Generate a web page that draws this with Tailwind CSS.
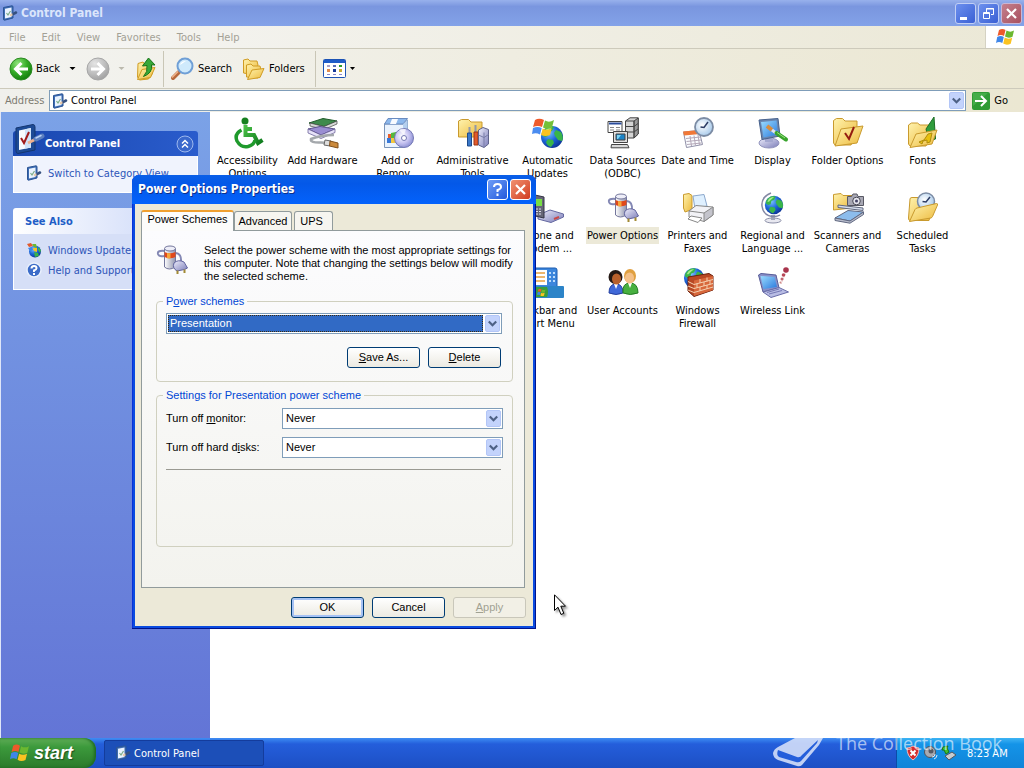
<!DOCTYPE html>
<html lang="en">
<head>
  <meta charset="UTF-8" />
  <meta name="viewport" content="width=device-width, initial-scale=1.0"/>
  <title>Control Panel</title>
  <script src="https://cdn.jsdelivr.net/npm/@tailwindcss/browser@4"></script>
</head>
<body class="relative flex h-screen flex-col overflow-hidden bg-white font-['DejaVu_Sans_Condensed','DejaVu_Sans',sans-serif] text-[11px] leading-[13px] text-black">

  <!-- Shared icon parts -->
  <svg class="absolute size-0" aria-hidden="true">
    <defs>
      <linearGradient id="gold" x1="0" y1="0" x2="1" y2="1"><stop offset="0" stop-color="#fff3ae"/><stop offset="1" stop-color="#ecb93c"/></linearGradient>
      <linearGradient id="glass" x1="0" y1="0" x2="1" y2="1"><stop offset="0" stop-color="#9adcff"/><stop offset="1" stop-color="#2a78dc"/></linearGradient>
      <linearGradient id="metal" x1="0" y1="0" x2="1" y2="0"><stop offset="0" stop-color="#ffffff"/><stop offset="1" stop-color="#8f93ad"/></linearGradient>
      <linearGradient id="lilac" x1="0" y1="0" x2="1" y2="1"><stop offset="0" stop-color="#eeeefc"/><stop offset="1" stop-color="#7b7db8"/></linearGradient>
      <linearGradient id="leaf" x1="0" y1="0" x2="1" y2="1"><stop offset="0" stop-color="#4cc048"/><stop offset="1" stop-color="#0c7a1c"/></linearGradient>
      <radialGradient id="sea" cx=".35" cy=".3" r=".8"><stop offset="0" stop-color="#7cc4ff"/><stop offset=".5" stop-color="#1c66d8"/><stop offset="1" stop-color="#0a2c8c"/></radialGradient>
      <radialGradient id="disc" cx=".4" cy=".4" r=".7"><stop offset="0" stop-color="#ffffff"/><stop offset=".5" stop-color="#c9c6f2"/><stop offset="1" stop-color="#7e83cc"/></radialGradient>
      <radialGradient id="dial" cx=".4" cy=".4" r=".7"><stop offset="0" stop-color="#ffffff"/><stop offset="1" stop-color="#9ec4e8"/></radialGradient>
      <radialGradient id="go" cx=".35" cy=".25" r=".85"><stop offset="0" stop-color="#8fe37c"/><stop offset=".5" stop-color="#35ac27"/><stop offset="1" stop-color="#0d7608"/></radialGradient>
      <radialGradient id="idle" cx=".35" cy=".25" r=".85"><stop offset="0" stop-color="#e4e4e4"/><stop offset=".6" stop-color="#bababa"/><stop offset="1" stop-color="#9b9b9b"/></radialGradient>
    </defs>
    <symbol id="flag" viewBox="0 0 19 18">
      <path fill="#ee5a2a" d="M3 2C5 .5 7.500 .5 9.500 2L8 8C6 6.700 3.800 6.700 1.500 8z"/>
      <path fill="#6bb830" d="M10.500 2.500C13 4 15.500 4 18 2.500L16.500 8.700C14 10 11.500 10 9 8.600z"/>
      <path fill="#3f86e8" d="M1.200 9C3.500 7.700 5.800 7.700 7.800 9L6.300 15C4 13.600 2 13.600 0 15z"/>
      <path fill="#fbc321" d="M8.700 9.600C11 11 13.600 11 16.200 9.700L14.700 15.700C12 17 9.500 17 7.200 15.500z"/>
    </symbol>
    <symbol id="panel" viewBox="0 0 32 32">
      <path fill="#1d4b96" stroke="#14366f" d="M3 5L20 1.500Q22 1.500 22 4V27L5 30.500Q3 30.500 3 28z"/>
      <path fill="#f7fbff" d="M6 7.500L18 5V24.500L6 27z"/>
      <path fill="#cfe3fa" d="M12 6.200L18 5V24.500L12 25.800z"/>
      <path fill="none" stroke="#a01c1c" stroke-width="2" d="M8 15l3 5 5-11"/>
      <path stroke="#f0b08c" stroke-width="3" d="M15 20L23 16"/>
      <path stroke="#5b7fc0" stroke-width="5" stroke-linecap="round" d="M23 16L29 13"/>
      <path stroke="#b9d0f4" stroke-width="1.500" stroke-linecap="round" d="M23 15L28 12.500"/>
    </symbol>
    <symbol id="panel-sm" viewBox="0 0 16 16">
      <path fill="#3c6cb4" stroke="#2c5494" d="M1.500 2.500L10 .8Q11 .8 11 2V13L2.500 15.200Q1.500 15.200 1.500 14z"/>
      <path fill="#eaf3ff" d="M3 3.800L9.500 2.600V12L3 13.400z"/>
      <path stroke="#7cac88" stroke-width="1.200" fill="none" d="M4.500 8l1.500 2 2.500-4"/>
      <path stroke="#e9c8a8" stroke-width="2" d="M8 10.500L11 9"/>
      <path stroke="#36507f" stroke-width="2.600" stroke-linecap="round" d="M11.500 8.800L14 7.500"/>
    </symbol>
    <symbol id="folder" viewBox="0 0 32 32">
      <path fill="url(#gold)" stroke="#c99a2e" d="M1.500 26L3 7Q3 5.500 5 5.500H11L13.500 8H24Q26 8 26 10V14L22 28.500H3Q1.500 28.500 1.500 26z"/>
    </symbol>
    <symbol id="folder-front" viewBox="0 0 32 32">
      <path fill="url(#gold)" stroke="#c99a2e" d="M2.500 29.500L8 17.500Q8.500 16.500 10 16L29.500 11.500Q31 11.500 30.500 13L25.500 24.500Q25 25.500 24 26z"/>
    </symbol>
    <symbol id="globe" viewBox="0 0 24 24">
      <circle cx="12" cy="12" r="11" fill="url(#sea)"/>
      <path fill="#39b54a" d="M5 4Q10 0 14 2L12 6 9 7 8 11 5 12 2 10Q2 6 5 4zM16 5L21 7Q24 12 22 16L18 15 15 11 14 8zM8 14L13 15 14 18 11 22Q7 21 6 17z"/>
      <path fill="#a4ec8c" d="M6 4.500Q9 2 12 2.500L9 5 6 8 4 8z"/>
    </symbol>
    <symbol id="battery" viewBox="0 0 32 32">
      <path fill="none" stroke="#8488b4" stroke-width="2" d="M9 7Q1 6 2 10Q3 13 8 12M19 9Q26 9 25 19"/>
      <path fill="url(#metal)" stroke="#73769c" d="M8.500 5V23Q13 27 19.500 23V5z"/>
      <ellipse cx="14" cy="4.500" rx="5.500" ry="2.500" fill="#eeeef8" stroke="#73769c"/>
      <path fill="#e0481a" d="M8.500 8Q14 10.500 19.500 8V13Q14 15.500 8.500 13z"/>
      <path fill="#f6a63a" d="M11 9V14.200Q13 14.600 14.500 14.500V9.300z"/>
      <path fill="url(#lilac)" stroke="#6265a0" d="M18 19Q22 15 28 18L31.500 24 28.500 25.500 21 27Q16 24 18 19z"/>
      <path stroke="#a28a34" stroke-width="2" d="M21.500 26.500V30M28.500 25.500V29"/>
    </symbol>
    <symbol id="chevron" viewBox="0 0 15 17">
      <rect x=".5" y=".5" width="14" height="16" rx="1.500" fill="#c3d3fc" stroke="#b3c6f7"/>
      <path fill="none" stroke="#4d6185" stroke-width="2.200" d="M3.800 6.500L7.500 10.200 11.200 6.500"/>
    </symbol>
  </svg>

  <!-- Title bar -->
  <header class="flex h-[26px] shrink-0 items-center bg-linear-to-b from-[#98b1ec] via-[#7a96df] via-25% to-[#83a2e8] pr-[2px] pl-[2px]">
    <svg class="size-4"><use href="#panel-sm"/></svg>
    <h1 class="ml-[3px] flex-1 text-[12px] font-bold text-[#dbe5fb]">Control Panel</h1>
    <div class="flex gap-[2px]">
      <button aria-label="Minimize" class="size-[21px] rounded-[3px] border border-[#c1cff5] bg-linear-to-br from-[#6d90ee] to-[#3a5fd4]">
        <svg class="size-[19px]" viewBox="0 0 19 19"><path fill="#fff" d="M4 13h7v3H4z"/></svg>
      </button>
      <button aria-label="Restore" class="size-[21px] rounded-[3px] border border-[#c1cff5] bg-linear-to-br from-[#6d90ee] to-[#3a5fd4]">
        <svg class="size-[19px]" viewBox="0 0 19 19" fill="none" stroke="#fff"><path d="M7.500 8V4.500h7v6H12M7 5h8"/><path d="M4.500 8.500h6v6h-6zM4 9.500h7"/></svg>
      </button>
      <button aria-label="Close" class="size-[21px] rounded-[3px] border border-[#c9b6d4] bg-linear-to-br from-[#c4808e] to-[#a8505f]">
        <svg class="size-[19px]" viewBox="0 0 19 19"><path stroke="#fff" stroke-width="2.200" d="M5 5l9 9M14 5l-9 9"/></svg>
      </button>
    </div>
  </header>

  <!-- Menu bar -->
  <nav class="flex h-[23px] shrink-0 items-stretch border-b border-[#cdcabb] bg-linear-to-r from-[#f5f5f4] to-[#ebe8d6] pl-[9px] text-[#a3a196]">
    <div class="flex flex-1 items-center gap-4">
      <a href="#">File</a>
      <a href="#">Edit</a>
      <a href="#">View</a>
      <a href="#">Favorites</a>
      <a href="#">Tools</a>
      <a href="#">Help</a>
    </div>
    <div class="flex w-[39px] items-center justify-center border-l border-[#d5d2c3] bg-white">
      <svg class="h-[18px] w-[19px]"><use href="#flag"/></svg>
    </div>
  </nav>

  <!-- Toolbar -->
  <div class="flex h-10 shrink-0 items-center border-b border-[#cdcabb] bg-linear-to-r from-[#f3f3f0] to-[#ebe7d2] pl-[9px]">
    <button class="flex items-center gap-[3px]">
      <svg class="size-6" viewBox="0 0 24 24"><circle cx="12" cy="12" r="11" fill="url(#go)" stroke="#2b8a22"/><path fill="none" stroke="#fff" stroke-width="3" d="M12.500 6L6.500 12l6 6M7 12h12"/></svg>
      <span>Back</span>
      <svg class="ml-[6px] h-[3px] w-[7px]" viewBox="0 0 7 3"><path d="M.5 0h6L3.500 3z"/></svg>
    </button>
    <button disabled class="ml-[10px] flex items-center gap-2" aria-label="Forward">
      <svg class="size-6" viewBox="0 0 24 24"><circle cx="12" cy="12" r="11" fill="url(#idle)" stroke="#a6a6a6"/><path fill="none" stroke="#fff" stroke-width="3" d="M11.500 6l6 6-6 6M17 12H5"/></svg>
      <svg class="h-[3px] w-[7px]" viewBox="0 0 7 3"><path fill="#bbb9ad" d="M.5 0h6L3.500 3z"/></svg>
    </button>
    <button aria-label="Up" class="ml-[10px]">
      <svg class="h-6 w-[22px]" viewBox="0 0 22 24">
        <path fill="url(#gold)" stroke="#d09c24" d="M2.500 20L3 6.500 8 5l1.500 2 7-.5 1 10-4 5.500-9 1z"/>
        <path fill="url(#gold)" stroke="#d09c24" d="M2.500 22.500L7 12.500l13-2-4.500 10z"/>
        <path fill="#38a838" stroke="#167418" d="M13.500 1L20 8l-3.500-.2Q18 16 8.500 19.500 13 15 12 8.500L7.500 9z"/>
      </svg>
    </button>
    <div class="mx-[6px] h-9 w-px bg-[#c9c6b6]"></div>
    <button class="flex items-center gap-1">
      <svg class="size-6" viewBox="0 0 24 24">
        <path stroke="#b8693c" stroke-width="4" stroke-linecap="round" d="M3 21l6-6"/><path stroke="#f0b48c" stroke-width="1.500" d="M2 20.500l6-6"/>
        <circle cx="15" cy="9" r="7.500" fill="#cfeafc" stroke="#6f9fd6" stroke-width="2"/><path fill="#fff" d="M10 8q1-4 6-4-3 2-6 4z"/>
      </svg>
      <span>Search</span>
    </button>
    <button class="ml-[10px] flex items-center gap-1">
      <svg class="h-6 w-[23px]" viewBox="0 0 23 24">
        <path fill="url(#gold)" stroke="#d09c24" d="M1.500 16V3L6 2l2 2h7l1 4-3 10z"/>
        <path fill="url(#gold)" stroke="#d09c24" d="M4.500 20V8L9 7l2 2h7l1 4-3 8z"/>
        <path fill="url(#gold)" stroke="#d09c24" d="M5.500 22.500L10 13l12-1.500-4 9z"/>
      </svg>
      <span>Folders</span>
    </button>
    <div class="mr-[7px] ml-[10px] h-9 w-px bg-[#c9c6b6]"></div>
    <button aria-label="Views" class="flex items-center gap-1">
      <svg class="h-[19px] w-[23px]" viewBox="0 0 23 19">
        <rect x=".5" y=".5" width="22" height="18" rx="1" fill="#fff" stroke="#1c53b4"/><path fill="#1f5cc8" d="M1 1h21v3H1z"/>
        <path fill="#a8a0c8" d="M4 6h3v2H4z"/><path fill="#5b6fb8" d="M10 6h3v2h-3z"/><path fill="#2c9a2c" d="M16 6h3v2h-3z"/>
        <path fill="#e08a4c" d="M4 10h3v3H4z"/><path fill="#163a98" d="M10 10h3v3h-3z"/><path fill="#c8a830" d="M16 10h3v3h-3z"/>
        <path fill="#88c" d="M4 15h3v1H4zM10 15h3v1h-3zM16 15h3v1h-3z"/>
      </svg>
      <svg class="h-[3px] w-[5px]" viewBox="0 0 5 3"><path d="M0 0h5L2.500 3z"/></svg>
    </button>
  </div>

  <!-- Address bar -->
  <form class="flex h-[23px] shrink-0 items-center bg-linear-to-r from-[#f0f0ec] to-[#ebe7d2] pl-[5px]">
    <label for="address" class="w-11 text-[#7d7b71]">Address</label>
    <div class="flex h-[21px] flex-1 items-center border border-[#7f9db9] bg-white pr-px pl-[2px]">
      <svg class="size-4"><use href="#panel-sm"/></svg>
      <input id="address" type="text" value="Control Panel" class="ml-[3px] min-w-0 flex-1 outline-none" />
      <button type="button" aria-label="Show addresses"><svg class="h-[17px] w-[15px]"><use href="#chevron"/></svg></button>
    </div>
    <button type="button" class="mr-4 ml-[6px] flex items-center gap-1">
      <svg class="size-[18px]" viewBox="0 0 18 18"><rect width="18" height="18" rx="2" fill="#2f9b35"/><path fill="#5cc05e" d="M1 1h15L1 14z" opacity=".5"/><path fill="none" stroke="#fff" stroke-width="2" d="M3 9h11M9 4l5 5-5 5"/></svg>
      <span>Go</span>
    </button>
  </form>

  <div class="flex min-h-0 flex-1">
    <!-- Task pane -->
    <aside class="w-[210px] shrink-0 border-l border-[#dfe6f8] bg-linear-to-b from-[#7ba2e7] to-[#6375d6] px-3 pt-[19px] text-[#2d55b8]">
      <section>
        <div class="relative flex h-[25px] items-center rounded-t-[3px] bg-linear-to-r from-[#1a48b0] to-[#2a5ccc] pr-1 pl-8">
          <svg class="absolute -top-2 left-0 size-8"><use href="#panel"/></svg>
          <h2 class="flex-1 font-bold text-white">Control Panel</h2>
          <button aria-label="Collapse" class="h-[18px] w-[18px]">
            <svg class="size-[18px]" viewBox="0 0 18 18"><circle cx="9" cy="9" r="8" fill="#3a68cc" stroke="#9db8ee"/><path fill="none" stroke="#fff" stroke-width="1.500" d="M6 8.500l3-3 3 3M6 12.500l3-3 3 3"/></svg>
          </button>
        </div>
        <div class="h-[37px] border border-t-0 border-white bg-[#f0f3fd] pt-[9px] pl-3">
          <a href="#" class="flex items-center gap-[6px]"><svg class="size-4"><use href="#panel-sm"/></svg>Switch to Category View</a>
        </div>
      </section>
      <section class="mt-[15px]">
        <h2 class="flex h-[26px] items-center rounded-t-[3px] bg-linear-to-r from-white to-[#c6d3f7] pl-3 font-bold text-[#215dc6]">See Also</h2>
        <ul class="flex flex-col gap-1 border border-t-0 border-white bg-[#d6dff7] pt-2 pb-[11px] pl-3">
          <li><a href="#" class="flex items-center gap-[6px]">
            <svg class="size-4" viewBox="0 0 16 16"><circle cx="9" cy="9.500" r="6" fill="url(#sea)"/><path fill="#39b54a" d="M8 10l4 1 1 3-4 1zM12 5l3 3-1 3-2-3z"/><path fill="#e25a2c" d="M1 2l4-1 2 3-4 1z"/><path fill="#6bb830" d="M6 2l4 0 1 4-3-1z"/><path fill="#3f86e8" d="M2 6l4-1 1 3-3 1z"/><path fill="#fbc321" d="M7 6l4 0 0 4-3-1z"/></svg>
            Windows Update</a></li>
          <li><a href="#" class="flex items-center gap-[6px]">
            <svg class="size-4" viewBox="0 0 16 16"><circle cx="8" cy="8" r="7" fill="#3c6cc8" stroke="#e8effc" stroke-width="1.500"/><path fill="none" stroke="#fff" stroke-width="2" d="M5.500 6.500Q5.500 4 8 4t2.500 2.200Q10.500 7.500 8 8.500V10M8 11v2"/></svg>
            Help and Support</a></li>
        </ul>
      </section>
    </aside>

    <!-- Icons -->
    <main class="grid flex-1 auto-rows-[75px] grid-cols-[repeat(auto-fill,75px)] content-start pt-[5px] text-center whitespace-nowrap">
      <a href="#" class="flex flex-col items-center gap-[5px]">
        <svg class="size-8" viewBox="0 0 32 32">
          <circle cx="13" cy="4" r="3.500" fill="#17801f"/>
          <path fill="none" stroke="url(#leaf)" stroke-width="4" d="M13.500 8V18H22L26 26 30.500 23M14 12H20"/>
          <path fill="none" stroke="#1f9a2c" stroke-width="3.500" d="M9.500 13Q2 17 5 24Q9 31 16 29.500Q22 28 23 23"/>
        </svg>
        <span>Accessibility<br>Options</span>
      </a>
      <a href="#" class="flex flex-col items-center gap-[5px]">
        <svg class="size-8" viewBox="0 0 32 32">
          <path fill="#3f8a4c" stroke="#225c2c" d="M2 6L16 1.500 30 4 17 9.500z"/><path fill="#d8dad8" stroke="#444" stroke-width=".7" d="M17 9.500L30 4V7L17 12.500 3 9V6z"/>
          <path fill="#9a8ed2" stroke="#5c528c" d="M1 12L13 9.500 28 12 14 18z"/><path fill="#e6e2f8" stroke="#5c528c" stroke-width=".7" d="M14 18L28 12V15.500L14 21.500 1 16V12z"/>
          <path fill="none" stroke="#a4a8ac" stroke-width="2.500" d="M27 18Q14 18 4 22Q3 26 14 25.500L21 26"/>
          <path fill="#ddd" stroke="#666" d="M18 23L24 24 23 29 17 28z"/><path fill="#cc8a3c" stroke="#80501c" d="M23 24L31 26V31L22.500 29z"/>
        </svg>
        <span>Add Hardware</span>
      </a>
      <a href="#" class="flex flex-col items-center gap-[5px]">
        <svg class="size-8" viewBox="0 0 32 32">
          <path fill="#eaf3fd" stroke="#7a94b8" d="M2.500 7H21L25.500 3V26L21 30.500H2.500z"/>
          <path fill="#8cb8ec" stroke="#6a8cc0" d="M2.500 7L6 1.500H25.500L21 7z"/><path fill="#f8fbff" d="M10 2h6l-2 5H8z"/>
          <path fill="#b4cfee" d="M21 7L25.500 3V26L21 30z"/>
          <path fill="#e8602c" d="M6 17h4v5H6z"/><path fill="#54b83c" d="M9 16l5-1v7H9z"/><path fill="#3878d8" d="M5 21h5v5H5z"/><path fill="#f4c83c" d="M9 21h5v5H9z"/>
          <circle cx="22" cy="21" r="9.500" fill="url(#disc)" stroke="#7478b4"/><circle cx="22" cy="21" r="2.500" fill="#fff" stroke="#7478b4"/>
          <path fill="#fff" opacity=".7" d="M22 18L17 13q4-2 7-.5z"/>
        </svg>
        <span>Add or<br>Remov...</span>
      </a>
      <a href="#" class="flex flex-col items-center gap-[5px]">
        <svg class="size-8" viewBox="0 0 32 32">
          <path fill="url(#gold)" stroke="#c99a2e" d="M1.500 20V4l3-1.500h7L14 5h11v15z"/>
          <path stroke="#9098a8" stroke-width="2" d="M12.500 10v10M18.500 8v10"/><path fill="#3a78c8" stroke="#1c4a8c" d="M10.500 16h4v13h-4z"/><path fill="#e25a2c" stroke="#9c3412" d="M17 15h4v13h-4z"/>
          <path fill="url(#lilac)" stroke="#60648c" d="M21.500 13L26 10.500 31.500 12.500V27L27 30.500 21.500 28z"/><path fill="none" stroke="#787ca8" d="M21.500 18L27 20.500 31.500 17.500M27 15.500V30"/>
        </svg>
        <span>Administrative<br>Tools</span>
      </a>
      <a href="#" class="flex flex-col items-center gap-[5px]">
        <svg class="size-8" viewBox="0 0 32 32">
          <use href="#globe" x="8" y="8" width="24" height="24"/>
          <path fill="#ee5a2a" d="M3 3Q7 .5 12 3L10 10Q6 8 1 10z"/><path fill="#74c038" d="M13 3.500Q17 6 22 3L20 10.500Q15.500 13 11 10.500z"/>
          <path fill="#4a8cf0" d="M1 11Q5.500 9 9.700 11L8 17.500Q4 15.500 0 17z"/><path fill="#fbc321" d="M10.700 11.500Q15 14 19.700 11.500L18 18Q13.500 20 9 18z"/>
        </svg>
        <span>Automatic<br>Updates</span>
      </a>
      <a href="#" class="flex flex-col items-center gap-[5px]">
        <svg class="size-8" viewBox="0 0 32 32" stroke="#444">
          <path fill="#d4d4d4" d="M18.500 4L23 .8H31.200V17L27 21H18.500z"/><path fill="#9a9a9a" d="M27 4L31.200 1V17L27 21z"/><path fill="none" d="M18.500 4H27V21M18.500 9.500H27L31 6.500M18.500 15H27L31 12"/>
          <path fill="#fff" d="M1 4.500H15V15.500H1z"/><path fill="#2a4c9c" stroke="none" d="M2 5.500H14.500V7.500H2z"/><path stroke="#888" d="M3 10.500H7M9 10.500H13M3 13H7M9 13H13"/>
          <path fill="#ddd" d="M6.500 14.500H20.500V25.500H6.500z"/><path fill="#1c84c8" d="M9 17H18V23H9z"/><path fill="#7fd4f4" stroke="none" d="M10 18h4l-3 4h-1z"/>
          <path fill="#d8d8d8" d="M4.500 27.500H20.500L22 30.800H4z"/>
        </svg>
        <span>Data Sources<br>(ODBC)</span>
      </a>
      <a href="#" class="flex flex-col items-center gap-[5px]">
        <svg class="size-8" viewBox="0 0 32 32">
          <path fill="#fafcff" stroke="#9090a8" d="M1.500 15L17 13.500 20.500 27.500 4.500 30.500z"/><path fill="#f07838" d="M1 14.500L17.500 13 18.500 17 2 18.500z"/>
          <path stroke="#b4a8b8" d="M4 21.500L18.500 20M4.500 24.500L19 23M5 27.500L19.500 26M8 19L9.500 29M12 18.500L13.500 28.500M16 18L17.500 28"/>
          <circle cx="22" cy="10" r="9" fill="url(#dial)" stroke="#7c8ca4" stroke-width="1.800"/><path fill="none" stroke="#2c3c64" stroke-width="1.500" d="M26 5L22 10.500 18.500 10"/>
        </svg>
        <span>Date and Time</span>
      </a>
      <a href="#" class="flex flex-col items-center gap-[5px]">
        <svg class="size-8" viewBox="0 0 32 32">
          <ellipse cx="12" cy="26" rx="10" ry="5" fill="url(#lilac)" stroke="#9092bc"/><path fill="#a4a8d0" d="M8 20h8v5H8z"/>
          <path fill="#6a86b0" stroke="#48628c" d="M2 3L21 1.500 23 19 5 22.500z"/><path fill="url(#glass)" d="M4 5L19.500 3.500 21 17.500 6.500 20.500z"/>
          <path stroke="#d88c3c" stroke-width="4" d="M10 9L15 13"/><path stroke="#e4e4ec" stroke-width="3" d="M15 13L19 16"/><path stroke="#38a42c" stroke-width="4" stroke-linecap="round" d="M19.500 16L29 22.500"/><path stroke="#9ce080" d="M20 15.500L28 21"/>
        </svg>
        <span>Display</span>
      </a>
      <a href="#" class="flex flex-col items-center gap-[5px]">
        <svg class="size-8" viewBox="0 0 32 32"><path fill="url(#gold)" stroke="#c99a2e" d="M1.500 26V3.500l3-2h6L13 4h12v12L19 28H3z"/><path fill="url(#gold)" stroke="#c99a2e" d="M3 29L9 12l22-3-6 17z"/><path fill="none" stroke="#941c10" stroke-width="2" d="M13 16l4 6 5-12"/></svg>
        <span>Folder Options</span>
      </a>
      <a href="#" class="flex flex-col items-center gap-[5px]">
        <svg class="size-8" viewBox="0 0 32 32"><path fill="url(#gold)" stroke="#c99a2e" d="M1.500 27V8l3-2h6L13 8h11v12L19 29H3z"/><path fill="#2f9c3c" stroke="#1c6c24" d="M19 12L27 0 28.500 22 22 24z"/><path fill="url(#gold)" stroke="#c99a2e" d="M3 30.500L9 17l21-4-5 14z"/><path fill="#e8c010" stroke="#b08c0c" d="M12 25l5-2 4-6 4-1-2 9-3 1v-3l-4 1-1 3z"/></svg>
        <span>Fonts</span>
      </a>

      <a href="#" class="col-start-5 flex flex-col items-center gap-[5px]">
        <svg class="size-8" viewBox="0 0 32 32"><path fill="url(#lilac)" stroke="#6468a0" d="M6 23L18 18 31.500 22V25L19 30.500 6 27z"/><path stroke="#c84848" stroke-width="2" d="M22 27l5-2"/><path fill="#667" stroke="#334" d="M3 3L12 5V26L3 24z"/><path fill="#78dc44" d="M3 7h7v7H3z"/><path stroke="#dde" stroke-dasharray="2 1" d="M4 17h6M4 19.500h6M4 22h6"/></svg>
        <span>Phone and<br>Modem ...</span>
      </a>
      <a href="#" class="flex flex-col items-center gap-[3px]">
        <svg class="size-8"><use href="#battery"/></svg>
        <span class="bg-[#ece9d8] px-px py-[2px]">Power Options</span>
      </a>
      <a href="#" class="flex flex-col items-center gap-[5px]">
        <svg class="size-8" viewBox="0 0 32 32"><path fill="url(#gold)" stroke="#c99a2e" d="M1.500 16V2.500L7 1.500l3 2v14L3 20z"/><path fill="#dff0ff" stroke="#8ca8cc" d="M11 4L22 2.500 25 14 13 17z"/><path fill="#f2f2f6" stroke="#888" d="M7 19L14 13.500 31 15V23L22 29.500 7 25z"/><path fill="#c4c4cc" stroke="#888" d="M22 21L31 15V23L22 29.500z"/><path fill="#fff" stroke="#888" d="M9 24L20 26 16 30.500 6 27z"/><path fill="none" stroke="#888" d="M7 19l15 2"/></svg>
        <span>Printers and<br>Faxes</span>
      </a>
      <a href="#" class="flex flex-col items-center gap-[5px]">
        <svg class="size-8" viewBox="0 0 32 32"><ellipse cx="16" cy="28.500" rx="8" ry="2.500" fill="#e8e8f0" stroke="#8c90a8"/><path fill="#a0a4b8" d="M14 23h4v5h-4z"/><path fill="none" stroke="#8488a4" stroke-width="1.500" d="M14 1Q4 5 5 14Q6 23 15 24.500Q20 25 23 23"/><use href="#globe" x="7" y="3" width="20" height="20"/></svg>
        <span>Regional and<br>Language ...</span>
      </a>
      <a href="#" class="flex flex-col items-center gap-[5px]">
        <svg class="size-8" viewBox="0 0 32 32"><path fill="url(#gold)" stroke="#c99a2e" d="M1.500 18V2.500L9 1.500l2 2h9V16z"/><path fill="#a8a8b4" stroke="#585864" d="M15.500 4.500h4l1.500-2.500h4l1 2.500h5.500v9h-16z"/><circle cx="24.500" cy="9" r="3.800" fill="#e8e8f0" stroke="#484854"/><circle cx="24.500" cy="9" r="1.500" fill="#446"/><path fill="#d4dcec" stroke="#606880" d="M6 13L31 16V18.500L6 15.500z"/><path fill="#8cbcec" stroke="#606880" d="M3 26L16 18.500 31.500 20 18 29z"/><path fill="#b8bccc" stroke="#606880" d="M3 26L18 29 31.500 20V22.500L18 31.200 3 28.500z"/></svg>
        <span>Scanners and<br>Cameras</span>
      </a>
      <a href="#" class="flex flex-col items-center gap-[5px]">
        <svg class="size-8" viewBox="0 0 32 32"><use href="#folder"/><circle cx="19" cy="9.500" r="8.500" fill="url(#dial)" stroke="#7c8ca4" stroke-width="1.500"/><path fill="none" stroke="#2c3c64" stroke-width="1.500" d="M23 5L19 10 15.500 9.500"/><use href="#folder-front"/></svg>
        <span>Scheduled<br>Tasks</span>
      </a>

      <a href="#" class="col-start-5 flex flex-col items-center gap-[5px]">
        <svg class="size-8" viewBox="0 0 32 32"><rect x="1" y="1" width="24" height="20" rx="2" fill="#3c86dc" stroke="#1c5cb0"/><path fill="#fff" d="M2 3h13v15H2z"/><path stroke="#e8a040" stroke-width="1.500" d="M4 6h9M4 10h9M4 14h9"/><path stroke="#bcdcfc" stroke-width="2" stroke-dasharray="2 2" d="M17 6h7M17 10h7M17 14h7"/><rect x="0" y="19" width="32" height="12" rx="1" fill="#2c84c8"/><path fill="#3a9c3c" d="M0 20h15q2 5 0 10H0z"/><use href="#flag" x="5" y="21" width="9" height="9"/></svg>
        <span>Taskbar and<br>Start Menu</span>
      </a>
      <a href="#" class="flex flex-col items-center gap-[5px]">
        <svg class="size-8" viewBox="0 0 32 32"><path fill="#4068d8" stroke="#2440a0" d="M2 26Q2 17 9 17T16 26Q9 29 2 26z"/><path fill="#48b040" stroke="#247c24" d="M16 26Q15 16 23 16T31 26Q23 29 16 26z"/><path fill="#fff" d="M7 17h4l-2 5zM21 16h4l-2 5z"/><circle cx="8.500" cy="10" r="7" fill="#241814"/><ellipse cx="9.500" cy="12" rx="4.500" ry="5.500" fill="#b8602c"/><ellipse cx="23" cy="9" rx="6" ry="7" fill="#e0a040"/><ellipse cx="22.500" cy="11" rx="4.500" ry="5.500" fill="#f4c088"/></svg>
        <span>User Accounts</span>
      </a>
      <a href="#" class="flex flex-col items-center gap-[5px]">
        <svg class="size-8" viewBox="0 0 32 32"><use href="#globe" x="1" y="0" width="22" height="22"/><path fill="#b84824" stroke="#6c200c" d="M6 10L27 6.500 31 9V23L12 29.500 6 24z"/><path fill="#d8683c" d="M12 13.500L31 9V23L12 29z"/><path fill="none" stroke="#f4d0b0" d="M6 14.500L12 17.500 31 12.500M6 19L12 21.500 31 16.500M6 23L12 25.500 31 20M18 12v4M25 10.500v4M15 16.500v4M22 15v4M28 13.500v4M18 20v4M25 18v4"/></svg>
        <span>Windows<br>Firewall</span>
      </a>
      <a href="#" class="flex flex-col items-center gap-[5px]">
        <svg class="size-8" viewBox="0 0 32 32"><path fill="#8890c8" stroke="#585c98" d="M1.500 8L4 6.500 19 8 22 21 6 25z"/><path fill="url(#glass)" d="M3.500 9L17.500 10 20 20 6.500 22z"/><path fill="#b8bce4" stroke="#686ca8" d="M6 25L22 20.500 31.500 25 14 30.500z"/><path stroke="#7478b4" d="M10 25.500L22 22M12 27L25 23.500"/><path stroke="#e4b4b4" stroke-dasharray="1 1" d="M24 17L30 3"/><circle cx="29" cy="3" r="2.800" fill="#a8344c"/><circle cx="26.500" cy="8" r="1.800" fill="#b84858"/><circle cx="25" cy="12" r="1.500" fill="#c06470"/><circle cx="23.500" cy="15.500" r="1" fill="#c88"/></svg>
        <span>Wireless Link</span>
      </a>
    </main>
  </div>

  <!-- Taskbar -->
  <footer class="relative flex h-[30px] shrink-0 items-stretch bg-linear-to-b from-[#3f8cf3] via-[#245edb] via-20% to-[#1d4fc4] text-white">
    <button class="flex w-24 items-center gap-1 rounded-r-xl bg-linear-to-b from-[#5eac56] via-[#3c9a3c] via-30% to-[#2b7a2b] pl-[10px] shadow-[inset_-2px_0_3px_#1f6a22]">
      <svg class="size-5"><use href="#flag"/></svg>
      <span class="font-['Liberation_Sans',sans-serif] text-[18px] leading-5 font-bold italic [text-shadow:1px_1px_1px_#1f4f1f]">start</span>
    </button>
    <button class="my-[2px] ml-2 flex w-40 items-center gap-[3px] rounded-[2px] border border-[#143c9c] bg-[#1c4fb8] pl-[10px]">
      <svg class="size-4"><use href="#panel-sm"/></svg>
      <span>Control Panel</span>
    </button>
    <div class="ml-auto flex w-32 items-center gap-[2px] border-l border-[#0c4ca8] bg-linear-to-b from-[#3cb4f4] via-[#1494e8] via-20% to-[#1184d8] pl-2">
      <svg class="size-4" viewBox="0 0 16 16"><path fill="#d42c2c" stroke="#f4b8b8" d="M8 1Q11 3 14 3Q14 11 8 15Q2 11 2 3Q5 3 8 1z"/><path stroke="#fff" stroke-width="2" d="M5.500 5.500l5 5M10.500 5.500l-5 5"/></svg>
      <svg class="size-4" viewBox="0 0 16 16"><circle cx="7" cy="7" r="5.500" fill="#a8aab0" stroke="#50545c"/><circle cx="8" cy="6" r="2.500" fill="#565a64"/><path fill="none" stroke="#e0e8f4" d="M11 14q3-1 3-4M9 12q3 0 3-3"/></svg>
      <svg class="size-4" viewBox="0 0 16 16"><path fill="#c8ccd0" stroke="#505860" d="M4 11l7-4 4 3-7 5z"/><path fill="#40c030" stroke="#187818" d="M2 2l5-1-1 2 2 4-3 2-2-4-2 0z"/></svg>
      <span class="ml-2">8:23 AM</span>
    </div>
    <div class="pointer-events-none absolute inset-y-0 right-[22px] flex items-start gap-3">
      <svg class="h-[29px] w-[51px]" viewBox="0 0 51 29"><path fill="#d3def8" opacity=".9" d="M5 9L22 0H50L46 7 29 27Q27 29 24 28L5 22Q0 20 0 15Q1 11 5 9z"/><path fill="#245edb" d="M5 12L24 19Q27 20 29 17L45 2 44 5 28 23Q26 25 23 24L6 19Q3 17 5 12z"/></svg>
      <span class="-mt-[5px] font-['Open_Sans',sans-serif] text-[18px] leading-5 text-white/60">The Collection Book</span>
    </div>
  </footer>

  <!-- Power Options dialog -->
  <div role="dialog" aria-labelledby="dialog-title" class="absolute top-[175px] left-[132px] w-[404px] rounded-t-[7px] bg-[#0a4be0] px-[3px] pb-[3px] font-['Liberation_Sans',sans-serif] shadow-[inset_-1px_-1px_0_#00138c,inset_1px_0_0_#0831d9]">
    <div class="-mx-[3px] flex h-[29px] items-center gap-[2px] rounded-t-[7px] bg-linear-to-b from-[#0a5fe8] via-[#0458e8] via-30% to-[#0362fc] pr-[5px] pl-[6px]">
      <h2 id="dialog-title" class="flex-1 font-['DejaVu_Sans_Condensed','DejaVu_Sans',sans-serif] text-[12px] font-bold text-white [text-shadow:1px_1px_0_#0a2f8c]">Power Options Properties</h2>
      <button aria-label="Help" class="size-[21px] rounded-[3px] border border-white bg-linear-to-br from-[#6f9cf6] to-[#2358dc]">
        <svg class="size-[19px]" viewBox="0 0 19 19"><path fill="none" stroke="#fff" stroke-width="2" d="M6 7Q6 4 9.500 4T13 7Q13 9 9.500 10V12M9.500 13.500V16"/></svg>
      </button>
      <button aria-label="Close" class="size-[21px] rounded-[3px] border border-white bg-linear-to-br from-[#f09070] to-[#d0381c]">
        <svg class="size-[19px]" viewBox="0 0 19 19"><path stroke="#fff" stroke-width="2.200" d="M5 5l9 9M14 5l-9 9"/></svg>
      </button>
    </div>

    <div class="bg-[#ece9d8] pt-[6px] pr-2 pb-2 pl-[6px]">
      <div role="tablist" class="flex items-end">
        <button role="tab" aria-selected="true" class="relative z-10 -mb-px h-[21px] w-[93px] rounded-t-[3px] border border-t-2 border-b-0 border-[#919b9c] border-t-[#f0a030] bg-[#fcfcfb] pb-1">Power Schemes</button>
        <button role="tab" class="h-[19px] w-[58px] rounded-t-[3px] border border-b-0 border-[#919b9c] bg-[#f6f5f0]">Advanced</button>
        <button role="tab" class="ml-[2px] h-[19px] w-[39px] rounded-t-[3px] border border-b-0 border-[#919b9c] bg-[#f6f5f0] pr-1">UPS</button>
      </div>
      <div role="tabpanel" class="h-[358px] border border-[#919b9c] bg-linear-to-b from-[#fcfcfe] to-[#f3f3ee] pt-[13px] pr-[11px] pl-[14px]">
        <div class="flex gap-4">
          <svg class="size-8 shrink-0"><use href="#battery"/></svg>
          <p>Select the power scheme with the most appropriate settings for this computer. Note that changing the settings below will modify the selected scheme.</p>
        </div>

        <fieldset class="mt-3 rounded-[4px] border border-[#d0d0bf] px-[9px] pt-[5px] pb-[13px]">
          <legend class="-ml-[3px] px-[3px] text-[#0046d5]"><label for="scheme">P<u>o</u>wer schemes</label></legend>
          <div class="relative mr-px border border-[#7f9db9] bg-white p-px pr-[18px]">
            <select id="scheme" class="block h-[17px] w-full appearance-none bg-[#316ac5] pl-[2px] text-white outline-1 -outline-offset-1 outline-dotted outline-[#3a2c10]">
              <option>Presentation</option>
            </select>
            <svg class="pointer-events-none absolute top-px right-px h-[17px] w-[15px]"><use href="#chevron"/></svg>
          </div>
          <div class="mt-[13px] mr-[2px] flex justify-end gap-2">
            <button class="h-[21px] w-[73px] rounded-[3px] border border-[#003c74] bg-linear-to-b from-white to-[#eceae2]"><u>S</u>ave As...</button>
            <button class="h-[21px] w-[73px] rounded-[3px] border border-[#003c74] bg-linear-to-b from-white to-[#eceae2]"><u>D</u>elete</button>
          </div>
        </fieldset>

        <fieldset class="mt-[7px] h-[158px] rounded-[4px] border border-[#d0d0bf] px-[9px] pt-[6px]">
          <legend class="-ml-[3px] px-[3px] text-[#0046d5]">Settings for Presentation power scheme</legend>
          <div class="grid grid-cols-[116px_1fr] items-center gap-y-2">
            <label for="monitor">Turn off <u>m</u>onitor:</label>
            <div class="relative">
              <select id="monitor" class="block h-[21px] w-full appearance-none border border-[#7f9db9] bg-white pl-[3px]"><option>Never</option></select>
              <svg class="pointer-events-none absolute top-[2px] right-[2px] h-[17px] w-[15px]"><use href="#chevron"/></svg>
            </div>
            <label for="disks">Turn off hard d<u>i</u>sks:</label>
            <div class="relative">
              <select id="disks" class="block h-[21px] w-full appearance-none border border-[#7f9db9] bg-white pl-[3px]"><option>Never</option></select>
              <svg class="pointer-events-none absolute top-[2px] right-[2px] h-[17px] w-[15px]"><use href="#chevron"/></svg>
            </div>
          </div>
          <hr class="mt-[11px] mr-[2px] border-[#9a9a92]" />
        </fieldset>
      </div>

      <div class="mt-[9px] -mr-px flex justify-end gap-2">
        <button class="h-[21px] w-[73px] rounded-[3px] border border-[#003c74] bg-linear-to-b from-white to-[#eceae2] shadow-[inset_0_0_0_2px_#a6c2f4]">OK</button>
        <button class="h-[21px] w-[73px] rounded-[3px] border border-[#003c74] bg-linear-to-b from-white to-[#eceae2]">Cancel</button>
        <button disabled class="h-[21px] w-[73px] rounded-[3px] border border-[#c9c7ba] bg-[#f2f0e6] text-[#a1a192]"><u>A</u>pply</button>
      </div>
    </div>
  </div>

  <!-- Mouse pointer -->
  <svg class="pointer-events-none absolute top-[594px] left-[554px] h-[23px] w-[15px] drop-shadow-[2px_2px_1px_#0006]" viewBox="0 0 15 23"><path fill="#fff" stroke="#000" d="M.5.8V16.500L4 13.200 7 20.500 9.800 19.300 6.800 12.200H11.500z"/></svg>
</body>
</html>
